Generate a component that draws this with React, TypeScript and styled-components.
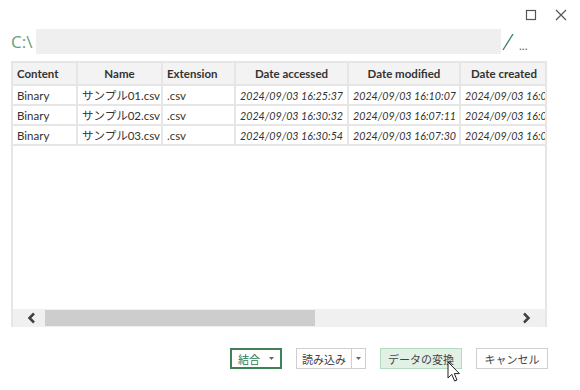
import React from "react";
import styled, { createGlobalStyle } from "styled-components";

const GlobalStyle = createGlobalStyle`
  body {
    margin: 0;
    background: #ffffff;
    font-family: Lato, "Noto Sans CJK JP", sans-serif;
    color: #333333;
  }
`;

const Window = styled.div`
  position: relative;
  width: 580px;
  height: 390px;
  overflow: hidden;
  background: #ffffff;
`;

const TitleBar = styled.div`
  height: 29px;
  display: flex;
  justify-content: flex-end;
  align-items: flex-start;
  padding: 9px 13px 0 0;
  box-sizing: border-box;
  gap: 18px;
`;

const WinIcon = styled.svg`
  width: 12px;
  height: 12px;
  stroke: #555555;
  fill: none;
`;

const PathRow = styled.div`
  display: flex;
  align-items: center;
  height: 25px;
  padding-left: 11px;
`;

const Drive = styled.div`
  font-family: "Open Sans", sans-serif;
  font-size: 17px;
  color: #6a9e7a;
  width: 25px;
  line-height: 25px;
`;

const PathField = styled.div`
  width: 465px;
  height: 25px;
  background: #efefef;
`;

const Ellipsis = styled.span`
  font-size: 12px;
  color: #666666;
  margin-left: 5px;
  margin-top: 8px;
`;

const TableBox = styled.div`
  margin: 7px 0 0 11px;
  width: 536px;
  height: 266px;
  border-left: 2px solid #e6e6e6;
  border-right: 2px solid #e6e6e6;
  box-sizing: border-box;
  display: flex;
  flex-direction: column;
  overflow: hidden;
`;

const TableArea = styled.div`
  flex: 1;
  overflow: hidden;
`;

const Grid = styled.table`
  border-collapse: collapse;
  table-layout: fixed;
  width: 536px;
  font-size: 11px;
  margin-left: -2px;
`;

const Th = styled.th<{ $align?: string }>`
  height: 21px;
  padding: 0 4px;
  background: #f3f3f3;
  border: 2px solid #e6e6e6;
  font-weight: 700;
  font-size: 11.5px;
  color: #333333;
  text-align: ${p => p.$align || "center"};
  white-space: nowrap;
  overflow: hidden;
`;

const Td = styled.td<{ $italic?: boolean }>`
  height: 18px;
  padding: 0 4px;
  border: 2px solid #e6e6e6;
  font-style: ${p => (p.$italic ? "italic" : "normal")};
  font-size: ${p => (p.$italic ? "10.7px" : "11.5px")};
  color: #333333;
  white-space: nowrap;
  overflow: hidden;
  text-overflow: clip;
`;

const Scrollbar = styled.div`
  height: 18px;
  background: #f0f0f0;
  display: flex;
  align-items: center;
  margin-left: -2px;
  margin-right: -2px;
`;

const Arrow = styled.svg`
  width: 10px;
  height: 12px;
  margin: 0 8px 0 16px;
  fill: none;
  stroke: #404040;
  stroke-width: 2.5;
`;

const Thumb = styled.div`
  width: 270px;
  height: 16px;
  background: #cdcdcd;
`;

const Track = styled.div`
  flex: 1;
  display: flex;
  justify-content: flex-end;
  padding-right: 16px;
`;

const Footer = styled.div`
  display: flex;
  justify-content: flex-end;
  gap: 14px;
  margin-top: 21px;
  padding-right: 32px;
`;

const Button = styled.div<{ $variant?: "primary" | "active"; $w: number }>`
  width: ${p => p.$w}px;
  height: 21px;
  box-sizing: border-box;
  display: flex;
  align-items: center;
  justify-content: center;
  white-space: nowrap;
  font-family: "Noto Sans CJK JP", sans-serif;
  font-size: 11px;
  color: ${p => (p.$variant === "primary" ? "#2f7a4a" : "#444444")};
  background: ${p => (p.$variant === "active" ? "#e2f1e6" : "#ffffff")};
  border: ${p =>
    p.$variant === "primary"
      ? "2px solid #3f8256"
      : p.$variant === "active"
      ? "1px solid #b3dbbd"
      : "1px solid #cfcfcf"};
`;

const Caret = styled.svg`
  width: 5px;
  height: 3px;
  fill: #666666;
  margin-left: 9px;
`;

const SplitMain = styled.span`
  padding: 0 5px;
  height: 100%;
  display: flex;
  align-items: center;
  border-right: 1px solid #cfcfcf;
`;

const SplitCaret = styled.span`
  flex: 1;
  display: flex;
  justify-content: center;
`;

const Cursor = styled.svg`
  position: absolute;
  left: 447px;
  top: 361px;
  width: 14px;
  height: 22px;
`;

const columns = [
  { label: "Content", w: 65, align: "left" },
  { label: "Name", w: 85 },
  { label: "Extension", w: 73, align: "left" },
  { label: "Date accessed", w: 113 },
  { label: "Date modified", w: 112 },
  { label: "Date created", w: 88 },
];

const rows = [
  ["サンプル01.csv", "2024/09/03 16:25:37", "2024/09/03 16:10:07", "2024/09/03 16:03:12"],
  ["サンプル02.csv", "2024/09/03 16:30:32", "2024/09/03 16:07:11", "2024/09/03 16:03:12"],
  ["サンプル03.csv", "2024/09/03 16:30:54", "2024/09/03 16:07:30", "2024/09/03 16:03:12"],
];

export default function App() {
  return (
    <Window>
      <GlobalStyle />
      <TitleBar>
        <WinIcon viewBox="0 0 12 12">
          <rect x="1.5" y="1.5" width="9" height="9" strokeWidth="1.2" />
        </WinIcon>
        <WinIcon viewBox="0 0 12 12">
          <path d="M1 1 L11 11 M11 1 L1 11" strokeWidth="1.2" />
        </WinIcon>
      </TitleBar>
      <PathRow>
        <Drive>C:\</Drive>
        <PathField />
        <svg width="12" height="19" viewBox="0 0 12 19" style={{ marginLeft: 1 }}>
          <line x1="1" y1="18" x2="11" y2="2" stroke="#3d7f5e" strokeWidth="1.3" />
        </svg>
        <Ellipsis>...</Ellipsis>
      </PathRow>
      <TableBox>
        <TableArea>
          <Grid>
            <colgroup>
              {columns.map(c => (
                <col key={c.label} style={{ width: c.w }} />
              ))}
            </colgroup>
            <thead>
              <tr>
                {columns.map(c => (
                  <Th key={c.label} $align={c.align}>
                    {c.label}
                  </Th>
                ))}
              </tr>
            </thead>
            <tbody>
              {rows.map(r => (
                <tr key={r[0]}>
                  <Td>Binary</Td>
                  <Td>{r[0]}</Td>
                  <Td>.csv</Td>
                  <Td $italic>{r[1]}</Td>
                  <Td $italic>{r[2]}</Td>
                  <Td $italic>{r[3]}</Td>
                </tr>
              ))}
            </tbody>
          </Grid>
        </TableArea>
        <Scrollbar>
          <Arrow viewBox="0 0 10 12">
            <path d="M7 1.5 L2.5 6 L7 10.5" />
          </Arrow>
          <Thumb />
          <Track>
            <Arrow viewBox="0 0 10 12" style={{ margin: 0 }}>
              <path d="M3 1.5 L7.5 6 L3 10.5" />
            </Arrow>
          </Track>
        </Scrollbar>
      </TableBox>
      <Footer>
        <Button $variant="primary" $w={52}>
          結合
          <Caret viewBox="0 0 5 3">
            <path d="M0 0 L5 0 L2.5 3 Z" />
          </Caret>
        </Button>
        <Button $w={70}>
          <SplitMain>読み込み</SplitMain>
          <SplitCaret>
            <Caret viewBox="0 0 5 3" style={{ margin: 0 }}>
              <path d="M0 0 L5 0 L2.5 3 Z" />
            </Caret>
          </SplitCaret>
        </Button>
        <Button $variant="active" $w={82}>
          データの変換
        </Button>
        <Button $w={72}>キャンセル</Button>
      </Footer>
      <Cursor viewBox="0 0 14 22">
        <path
          d="M1 1 L1 17 L4.8 13.4 L7.6 20 L10 19 L7.3 12.6 L12.4 12.6 Z"
          fill="#ffffff"
          stroke="#222222"
          strokeWidth="1"
          strokeLinejoin="round"
        />
      </Cursor>
    </Window>
  );
}
